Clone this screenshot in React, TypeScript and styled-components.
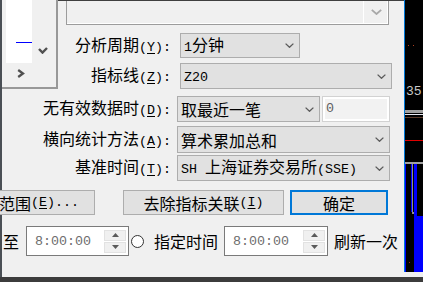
import React from "react";
import styled, { createGlobalStyle } from "styled-components";

const Global = createGlobalStyle`
  html, body { margin: 0; padding: 0; background: #f0f0f0; }
  body { font-family: "Noto Sans CJK SC", "Noto Sans", sans-serif; font-size: 16px; color: #000; }
`;

const Screen = styled.div`
  width: 423px;
  height: 282px;
  overflow: hidden;
  display: flex;
  flex-direction: column;
  background: #f0f0f0;
`;

const Body = styled.div`
  display: flex;
  height: 277px;
  flex: none;
`;

const BottomBar = styled.div`
  height: 5px;
  flex: none;
  background: #3c3c3c;
`;

const LeftEdge = styled.div`
  width: 2px;
  flex: none;
  background: #4a4f55;
`;

const Main = styled.div`
  width: 402px;
  flex: none;
  display: flex;
  flex-direction: column;
`;

const Chart = styled.div`
  width: 19px;
  height: 272px;
  flex: none;
  box-sizing: border-box;
  border-left: 1px solid #0078d7;
  background: #000;
  overflow: hidden;
`;

const Upper = styled.div`
  display: flex;
  height: 89px;
  flex: none;
`;

const LeftPanel = styled.div`
  width: 56px;
  height: 89px;
  box-sizing: border-box;
  border-right: 2px solid #989898;
  border-bottom: 2px solid #989898;
  padding-left: 4px;
  display: flex;
  flex-direction: column;
`;

const PanelTop = styled.div`
  display: flex;
  align-items: flex-start;
`;

const PreviewBox = styled.div`
  width: 26px;
  height: 63px;
  background: #fff;
  flex: none;
`;

const PanelIcon = styled.div<{ $mt: number; $ml: number }>`
  margin-top: ${(p) => p.$mt}px;
  margin-left: ${(p) => p.$ml}px;
  display: flex;
  line-height: 0;
`;

const UpperRight = styled.div`
  flex: 1;
  border-top: 1px solid #3f3f3f;
  padding-left: 8px;
  display: flex;
  flex-direction: column;
`;

const TopCombo = styled.div`
  width: 323px;
  height: 24px;
  box-sizing: border-box;
  border: 1px solid #9c9c9c;
  border-top: none;
  box-shadow: inset -1px -1px 0 #ffffff;
  background: #f0f0f0;
  display: flex;
  justify-content: flex-end;
`;

const TopDrop = styled.div`
  width: 24px;
  border-left: 1px solid #ffffff;
  display: flex;
  align-items: center;
  justify-content: center;
  margin-bottom: 1px;
`;

const FormRow = styled.div<{ $mt: number; $h: number }>`
  display: flex;
  align-items: center;
  height: ${(p) => p.$h}px;
  margin-top: ${(p) => p.$mt}px;
  flex: none;
`;

const Label = styled.div<{ $w: number }>`
  width: ${(p) => p.$w}px;
  flex: none;
  text-align: right;
  white-space: nowrap;
  line-height: 20px;
`;

const Combo = styled.div<{ $w: number; $h: number; $ml: number }>`
  width: ${(p) => p.$w}px;
  height: ${(p) => p.$h}px;
  margin-left: ${(p) => p.$ml}px;
  flex: none;
  box-sizing: border-box;
  border: 1px solid #adadad;
  background: #e1e1e1;
  display: flex;
  align-items: center;
  padding: 0 5px 0 3px;
  white-space: pre;
  line-height: 20px;
`;

const ComboText = styled.span`
  flex: 1;
`;

const Edit = styled.div<{ $w: number; $h: number; $ml: number }>`
  width: ${(p) => p.$w}px;
  height: ${(p) => p.$h}px;
  margin-left: ${(p) => p.$ml}px;
  flex: none;
  box-sizing: border-box;
  border: 1px solid #d2d2d2;
  box-shadow: inset 0 0 0 2px #ffffff;
  background: #f2f2f2;
  display: flex;
  align-items: center;
  padding-left: 3px;
  color: #606060;
  line-height: 20px;
`;

const ButtonRow = styled.div<{ $mt: number }>`
  display: flex;
  align-items: center;
  margin-top: ${(p) => p.$mt}px;
  height: 25px;
  flex: none;
`;

const Button = styled.div<{ $w: number; $ml: number; $default?: boolean }>`
  width: ${(p) => p.$w}px;
  height: 25px;
  margin-left: ${(p) => p.$ml}px;
  flex: none;
  box-sizing: border-box;
  border: ${(p) => (p.$default ? "2px solid #0078d7" : "1px solid #adadad")};
  background: #e1e1e1;
  display: flex;
  align-items: center;
  justify-content: center;
  white-space: pre;
  line-height: 20px;
`;

const BottomRow = styled.div<{ $mt: number }>`
  display: flex;
  align-items: center;
  margin-top: ${(p) => p.$mt}px;
  height: 30px;
  flex: none;
`;

const Word = styled.span<{ $ml: number }>`
  margin-left: ${(p) => p.$ml}px;
  flex: none;
  white-space: nowrap;
  line-height: 20px;
`;

const Spinner = styled.div<{ $w: number; $ml: number }>`
  width: ${(p) => p.$w}px;
  height: 30px;
  margin-left: ${(p) => p.$ml}px;
  flex: none;
  box-sizing: border-box;
  border: 1px solid #7a7a7a;
  background: #ffffff;
  display: flex;
  align-items: center;
  padding-left: 8px;
  color: #6d6d6d;
`;

const SpinCol = styled.div`
  margin-left: auto;
  margin-right: 2px;
  width: 22px;
  display: flex;
  flex-direction: column;
  gap: 1px;
`;

const SpinBtn = styled.div`
  height: 11px;
  box-sizing: border-box;
  border: 1px solid #e2e2e2;
  background: #f0f0f0;
  display: flex;
  align-items: center;
  justify-content: center;
  line-height: 0;
`;

const Radio = styled.div<{ $ml: number }>`
  width: 13px;
  height: 13px;
  margin-left: ${(p) => p.$ml}px;
  flex: none;
  box-sizing: border-box;
  border: 1px solid #333333;
  border-radius: 50%;
  background: #ffffff;
`;

const Latin = styled.span`
  font-family: "Liberation Mono", monospace;
  font-size: 13.33px;
  white-space: pre;
`;

const Mn = styled.span`
  text-decoration: underline;
  text-underline-offset: 2px;
`;

function txt(s: string) {
  const out: React.ReactNode[] = [];
  const re = /[\x20-\x7e]+|[^\x20-\x7e]+/g;
  let m: RegExpExecArray | null;
  let k = 0;
  while ((m = re.exec(s))) {
    const seg = m[0];
    if (/^[\x20-\x7e]/.test(seg)) {
      const i = seg.indexOf("&");
      if (i >= 0) {
        out.push(
          <Latin key={k++}>
            {seg.slice(0, i)}
            <Mn>{seg[i + 1]}</Mn>
            {seg.slice(i + 2)}
          </Latin>
        );
      } else {
        out.push(<Latin key={k++}>{seg}</Latin>);
      }
    } else {
      out.push(<span key={k++}>{seg}</span>);
    }
  }
  return out;
}

const Arrow = ({ color = "#5a5a5a" }: { color?: string }) => (
  <svg width="9" height="5" viewBox="0 0 9 5">
    <path d="M0.6 0.6 L4.5 4.3 L8.4 0.6" fill="none" stroke={color} strokeWidth="1.3" />
  </svg>
);

const TopArrow = () => (
  <svg width="11" height="6" viewBox="0 0 11 6">
    <path d="M0.8 0.8 L5.5 5 L10.2 0.8" fill="none" stroke="#a8a8a8" strokeWidth="1.8" />
  </svg>
);

const UpTri = () => (
  <svg width="7" height="4" viewBox="0 0 7 4">
    <path d="M0 4 L3.5 0 L7 4 Z" fill="#5a5a5a" />
  </svg>
);

const DownTri = () => (
  <svg width="7" height="4" viewBox="0 0 7 4">
    <path d="M0 0 L3.5 4 L7 0 Z" fill="#5a5a5a" />
  </svg>
);

function TimeSpin({ w, ml }: { w: number; ml: number }) {
  return (
    <Spinner $w={w} $ml={ml}>
      <Latin>8:00:00</Latin>
      <SpinCol>
        <SpinBtn>
          <UpTri />
        </SpinBtn>
        <SpinBtn>
          <DownTri />
        </SpinBtn>
      </SpinCol>
    </Spinner>
  );
}

export default function App() {
  return (
    <Screen>
      <Global />
      <Body>
        <LeftEdge />
        <Main>
          <Upper>
            <LeftPanel>
              <PanelTop>
                <PreviewBox>
                  <svg width="26" height="63" viewBox="0 0 26 63">
                    <rect x="10" y="42" width="16" height="1" fill="#0000ff" />
                  </svg>
                </PreviewBox>
                <PanelIcon $mt={47} $ml={6}>
                  <svg width="10" height="7" viewBox="0 0 10 7">
                    <path d="M1 2 L4.5 5.6 L9 1" fill="none" stroke="#505050" strokeWidth="2.4" />
                  </svg>
                </PanelIcon>
              </PanelTop>
              <PanelIcon $mt={6} $ml={11}>
                <svg width="8" height="9" viewBox="0 0 8 9">
                  <path d="M1.2 1 L6 4.5 L1.2 8" fill="none" stroke="#505050" strokeWidth="2.3" />
                </svg>
              </PanelIcon>
            </LeftPanel>
            <UpperRight>
              <TopCombo>
                <TopDrop>
                  <TopArrow />
                </TopDrop>
              </TopCombo>
              <FormRow $mt={8} $h={25}>
                <Label $w={105}>{txt("分析周期(&Y):")}</Label>
                <Combo $w={120} $h={25} $ml={9}>
                  <ComboText>{txt("1分钟")}</ComboText>
                  <Arrow />
                </Combo>
              </FormRow>
              <FormRow $mt={5} $h={26}>
                <Label $w={105}>{txt("指标线(&Z):")}</Label>
                <Combo $w={212} $h={26} $ml={9}>
                  <ComboText>{txt("Z20")}</ComboText>
                  <Arrow />
                </Combo>
              </FormRow>
            </UpperRight>
          </Upper>

          <FormRow $mt={7} $h={26}>
            <Label $w={169}>{txt("无有效数据时(&D):")}</Label>
            <Combo $w={143} $h={26} $ml={6}>
              <ComboText>{txt("取最近一笔")}</ComboText>
              <Arrow />
            </Combo>
            <Edit $w={68} $h={26} $ml={2}>
              {txt("0")}
            </Edit>
          </FormRow>
          <FormRow $mt={4} $h={27}>
            <Label $w={169}>{txt("横向统计方法(&A):")}</Label>
            <Combo $w={213} $h={27} $ml={6}>
              <ComboText>{txt("算术累加总和")}</ComboText>
              <Arrow />
            </Combo>
          </FormRow>
          <FormRow $mt={2} $h={26}>
            <Label $w={169}>{txt("基准时间(&T):")}</Label>
            <Combo $w={213} $h={26} $ml={6}>
              <ComboText>{txt("SH 上海证券交易所(SSE)")}</ComboText>
              <Arrow />
            </Combo>
          </FormRow>

          <ButtonRow $mt={9}>
            <Button $w={112} $ml={-19}>
              {txt("范围(&E)...")}
            </Button>
            <Button $w={161} $ml={28}>
              {txt("去除指标关联(&I)")}
            </Button>
            <Button $w={98} $ml={6} $default>
              {txt("确定")}
            </Button>
          </ButtonRow>

          <BottomRow $mt={11}>
            <Word $ml={1}>至</Word>
            <TimeSpin w={103} ml={7} />
            <Radio $ml={2} />
            <Word $ml={10}>指定时间</Word>
            <TimeSpin w={104} ml={6} />
            <Word $ml={6}>刷新一次</Word>
          </BottomRow>
        </Main>
        <Chart>
          <svg width="18" height="272" viewBox="0 0 18 272">
            <rect x="3" y="45" width="1" height="1" fill="#b04020" />
            <rect x="8" y="45" width="1" height="1" fill="#b04020" />
            <text x="1" y="95" fill="#c8c8c8" fontFamily="Liberation Mono, monospace" fontSize="13">
              35
            </text>
            <rect x="0" y="110" width="18" height="3" fill="#a0a0a0" />
            <rect x="0" y="114" width="18" height="1" fill="#e8e8f0" />
            <rect x="0" y="117" width="18" height="1" fill="#5a3a2a" />
            <rect x="0" y="140" width="18" height="1" fill="#e00000" />
            <rect x="0" y="162" width="18" height="2" fill="#a0a0a0" />
            <rect x="0" y="164" width="1" height="108" fill="#0000ff" />
            <rect x="6" y="164" width="1" height="48" fill="#0000ff" />
            <rect x="7" y="164" width="1" height="48" fill="#909090" />
            <rect x="7" y="212" width="2" height="2" fill="#909090" />
            <rect x="9" y="164" width="3" height="108" fill="#0000ff" />
            <rect x="10" y="216" width="8" height="56" fill="#0000ff" />
            <rect x="4" y="262" width="1" height="1" fill="#a02020" />
          </svg>
        </Chart>
      </Body>
      <BottomBar />
    </Screen>
  );
}
